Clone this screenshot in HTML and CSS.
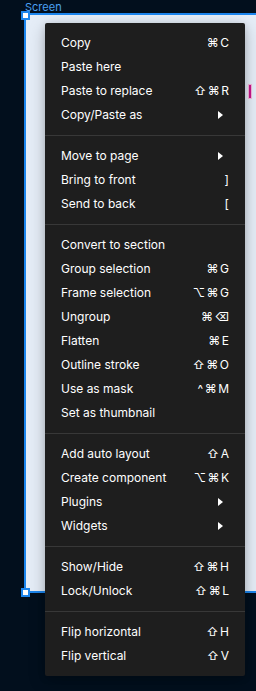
FILE: index.html
```html
<!DOCTYPE html>
<html lang="en">
<head>
  <meta charset="UTF-8" />
  <title>Context menu</title>
  <link rel="stylesheet" href="styles.css">
</head>
<body>
  <div class="canvas">
    <div class="frame-label">Screen</div>
    <div class="frame">
      <span class="cursor-mark"></span>
    </div>
    <span class="handle handle-tl"></span>
    <span class="handle handle-bl"></span>

    <div class="menu">
      <div class="group">
        <div class="item"><span>Copy</span><span class="keys">⌘C</span></div>
        <div class="item"><span>Paste here</span></div>
        <div class="item"><span>Paste to replace</span><span class="keys">⇧⌘R</span></div>
        <div class="item"><span>Copy/Paste as</span><span class="sub"></span></div>
      </div>
      <div class="group">
        <div class="item"><span>Move to page</span><span class="sub"></span></div>
        <div class="item"><span>Bring to front</span><span class="keys">]</span></div>
        <div class="item"><span>Send to back</span><span class="keys">[</span></div>
      </div>
      <div class="group">
        <div class="item"><span>Convert to section</span></div>
        <div class="item"><span>Group selection</span><span class="keys">⌘G</span></div>
        <div class="item"><span>Frame selection</span><span class="keys">⌥⌘G</span></div>
        <div class="item"><span>Ungroup</span><span class="keys">⌘⌫</span></div>
        <div class="item"><span>Flatten</span><span class="keys">⌘E</span></div>
        <div class="item"><span>Outline stroke</span><span class="keys">⇧⌘O</span></div>
        <div class="item"><span>Use as mask</span><span class="keys">^⌘M</span></div>
        <div class="item"><span>Set as thumbnail</span></div>
      </div>
      <div class="group">
        <div class="item"><span>Add auto layout</span><span class="keys">⇧A</span></div>
        <div class="item"><span>Create component</span><span class="keys">⌥⌘K</span></div>
        <div class="item"><span>Plugins</span><span class="sub"></span></div>
        <div class="item"><span>Widgets</span><span class="sub"></span></div>
      </div>
      <div class="group">
        <div class="item"><span>Show/Hide</span><span class="keys">⇧⌘H</span></div>
        <div class="item"><span>Lock/Unlock</span><span class="keys">⇧⌘L</span></div>
      </div>
      <div class="group">
        <div class="item"><span>Flip horizontal</span><span class="keys">⇧H</span></div>
        <div class="item"><span>Flip vertical</span><span class="keys">⇧V</span></div>
      </div>
    </div>
  </div>
</body>
</html>
```

FILE: styles.css
```css
:root {
  --canvas: #020f1d;
  --select: #1c86ee;
  --menu-bg: #1e1e1e;
  --menu-line: #383838;
}
html, body {
  margin: 0; height: 100%;
  background: var(--canvas);
  font-family: Inter, "Noto Sans", sans-serif;
  overflow: hidden;
}
.canvas {
  position: relative;
  width: 256px; height: 691px;
  overflow: hidden;
}
.frame-label {
  position: absolute; left: 25px; top: 0;
  font-size: 11px; line-height: 14px;
  color: #4aa0f2;
}
/* frame runs on past the right edge of the view, so no right border */
.frame {
  position: absolute; left: 24px; top: 13px;
  width: 230px; height: 576px;
  border: 2px solid var(--select);
  border-right: none;
  background: #e5edf7;
}
.cursor-mark {
  position: absolute; left: 223px; top: 70px;
  width: 2px; height: 13px;
  background: #c8178c;
  box-shadow: 0 0 0 1px #f3b7dc;
}
.handle {
  position: absolute;
  width: 5px; height: 5px;
  background: #fff;
  border: 2px solid var(--select);
}
.handle-tl { left: 21px; top: 11px; }
.handle-bl { left: 21px; top: 588px; }

.menu {
  position: absolute; left: 45px; top: 23px;
  width: 200px;
  background: var(--menu-bg);
  border-radius: 2px;
  box-shadow: 0 5px 17px rgba(0,0,0,.22), 0 2px 7px rgba(0,0,0,.15);
  padding: 8px 0;
  color: #fff;
  font-size: 12px;
}
.group + .group {
  border-top: 1px solid var(--menu-line);
  margin-top: 8px; padding-top: 8px;
}
.item {
  display: flex; justify-content: space-between; align-items: center;
  height: 24px; line-height: 24px;
  padding: 0 16px;
}
.keys {
  font-family: Inter, "DejaVu Sans", sans-serif;
  letter-spacing: 1.5px;
  margin-right: -1.5px;
}
.sub {
  width: 0; height: 0;
  border-left: 5px solid #fff;
  border-top: 4px solid transparent;
  border-bottom: 4px solid transparent;
  margin-right: 6px;
}
```
